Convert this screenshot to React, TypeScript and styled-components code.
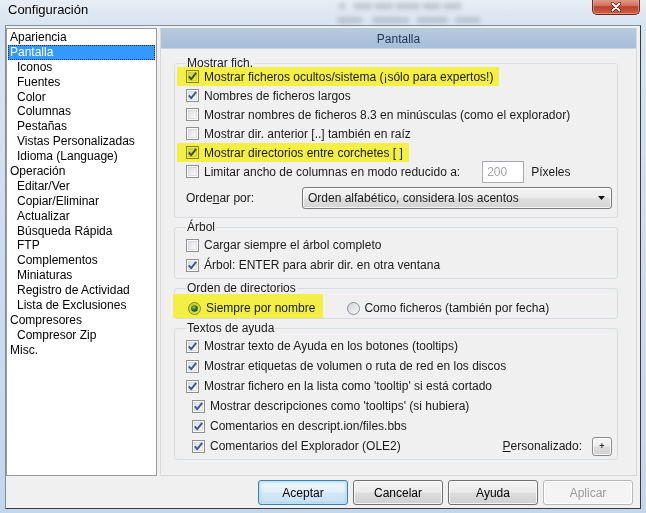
import React from "react";
import styled, { createGlobalStyle } from "styled-components";

const GlobalStyle = createGlobalStyle`
  html, body { margin: 0; padding: 0; }
  body {
    width: 646px; height: 513px; overflow: hidden;
    font-family: "Liberation Sans", Arial, sans-serif;
    font-size: 12px; color: #1a1a1a;
  }
  * { box-sizing: border-box; }
`;

const Window = styled.div`
  width: 646px;
  height: 513px;
  display: flex;
  flex-direction: column;
  padding: 0 5px 4px 5px;
  background: linear-gradient(180deg, #e6edf5 0%, #d8e4f0 5%, #c9dbed 60%, #c3d7ec 100%);
`;

const TitleBar = styled.div`
  height: 25px;
  flex: none;
  display: flex;
  align-items: flex-start;
  justify-content: space-between;
`;

const Title = styled.div`
  font-size: 13px;
  line-height: 16px;
  padding: 2px 0 0 3px;
  color: #000;
  text-shadow: 0 0 6px rgba(255, 255, 255, 0.95);
`;

const GlassBlur = styled.div`
  flex: 1;
  display: flex;
  flex-direction: column;
  align-items: center;
  gap: 6px;
  padding: 2px 0 0 120px;
  color: rgba(40, 50, 60, 0.3);
  filter: blur(2.4px);
  font-size: 10px;
  line-height: 8px;
  white-space: pre;
`;

const CloseButton = styled.div`
  width: 48px;
  height: 16px;
  margin: -1px 1px 0 0;
  border: 1px solid #6b2a22;
  border-top: none;
  border-radius: 0 0 5px 5px;
  background: linear-gradient(180deg, #e3a08e 0%, #d27560 42%, #bf4128 52%, #cb6448 100%);
  box-shadow: inset 0 0 0 1px rgba(255, 200, 180, 0.45);
  display: flex;
  align-items: center;
  justify-content: center;
`;

const Client = styled.div`
  flex: 1;
  display: flex;
  flex-direction: column;
  background: #f0f0f0;
  border: 1px solid #7f8fa3;
  border-right-color: #3c3c3c;
  border-bottom-color: #3c3c3c;
  padding: 2px 4px 3px 0;
`;

const MainRow = styled.div`
  flex: 1;
  display: flex;
  gap: 3px;
  min-height: 0;
`;

const Tree = styled.div`
  width: 151px;
  flex: none;
  background: #fff;
  border: 1px solid #9a9a9a;
  padding: 1px 1px;
`;

const TreeItem = styled.div<{ $level: number; $selected?: boolean }>`
  height: 14.9px;
  line-height: 14.9px;
  padding-left: ${(p) => 2 + p.$level * 7}px;
  white-space: nowrap;
  color: ${(p) => (p.$selected ? "#fff" : "#000")};
  background: ${(p) => (p.$selected ? "#3399ff" : "transparent")};
  outline: ${(p) => (p.$selected ? "1px dotted #0a2a5a" : "none")};
  outline-offset: -1px;
`;

const Panel = styled.div`
  flex: 1;
  display: flex;
  flex-direction: column;
  border: 1px solid #d8d8d8;
  border-top-color: #b9c6d5;
`;

const PanelHeader = styled.div`
  height: 20px;
  flex: none;
  display: flex;
  align-items: center;
  justify-content: center;
  background: linear-gradient(180deg, #b6c9df 0%, #a8bed8 100%);
  border-bottom: 1px solid #c9d4e0;
  color: #1d3350;
`;

const PanelBody = styled.div`
  flex: 1;
  display: flex;
  flex-direction: column;
  gap: 3px;
  padding: 8px 18px 0 13px;
`;

const Group = styled.fieldset<{ $pb: number }>`
  margin: 0;
  padding: 0 5px ${(p) => p.$pb}px 11px;
  border: 1px solid #d8dde2;
  border-radius: 3px;
  min-width: 0;
`;

const Legend = styled.legend`
  padding: 0 1px;
  line-height: 12px;
  font-size: 12px;
  color: #1a1a1a;
`;

const Rows = styled.div<{ $mt: number }>`
  display: flex;
  flex-direction: column;
  align-items: flex-start;
  margin-top: ${(p) => p.$mt}px;
`;

const Row = styled.div<{ $h: number; $indent?: number; $full?: boolean }>`
  height: ${(p) => p.$h}px;
  display: flex;
  align-items: center;
  gap: 5px;
  white-space: nowrap;
  margin-left: ${(p) => p.$indent || 0}px;
  align-self: ${(p) => (p.$full ? "stretch" : "auto")};
`;

const Marked = styled.div<{ $l: number; $r: number; $t?: number; $b?: number }>`
  display: flex;
  align-items: center;
  gap: 5px;
  background: #f3ef45;
  margin: ${(p) => `-${p.$t || 0}px 0 -${p.$b || 0}px -${p.$l}px`};
  padding: ${(p) => `${p.$t || 0}px ${p.$r}px ${p.$b || 0}px ${p.$l}px`};
  height: calc(100% + ${(p) => (p.$t || 0) + (p.$b || 0)}px);
  svg { mix-blend-mode: multiply; }
`;

const NumberInput = styled.div`
  width: 42px;
  height: 22px;
  flex: none;
  margin-left: 17px;
  background: #fff;
  border: 1px solid #abadb3;
  border-top-color: #a3a6ad;
  color: #a3a3a3;
  display: flex;
  align-items: center;
  padding-left: 4px;
`;

const SelectRow = styled.div`
  display: flex;
  align-items: center;
  margin-top: 6px;
  align-self: stretch;
`;

const SelectLabel = styled.span`
  width: 116px;
  flex: none;
`;

const Select = styled.div`
  width: 310px;
  height: 22px;
  display: flex;
  align-items: center;
  justify-content: space-between;
  padding: 0 6px 0 5px;
  border: 1px solid #7a7a7a;
  border-radius: 3px;
  background: linear-gradient(180deg, #f4f4f4 0%, #ececec 48%, #dfdfdf 52%, #d4d4d4 100%);
  box-shadow: inset 0 0 0 1px rgba(255, 255, 255, 0.75);
`;

const RadioOption = styled.div<{ $ml?: number }>`
  display: flex;
  align-items: center;
  gap: 4px;
  margin-left: ${(p) => p.$ml || 0}px;
`;

const Spacer = styled.div`
  flex: 1;
`;

const SmallButton = styled.div`
  width: 20px;
  height: 19px;
  margin-left: 5px;
  border: 1px solid #8a8a8a;
  border-radius: 3px;
  background: linear-gradient(180deg, #f6f6f6 0%, #ececec 48%, #dedede 52%, #d2d2d2 100%);
  box-shadow: inset 0 0 0 1px rgba(255, 255, 255, 0.8);
  display: flex;
  align-items: center;
  justify-content: center;
  font-size: 9px;
  font-weight: bold;
  color: #333;
`;

const ButtonRow = styled.div`
  flex: none;
  display: flex;
  justify-content: flex-end;
  gap: 5px;
  margin-top: 4px;
  padding-right: 3px;
`;

const Button = styled.div<{ $variant?: "default" | "disabled" }>`
  width: 90px;
  height: 25px;
  display: flex;
  align-items: center;
  justify-content: center;
  border-radius: 3px;
  border: 1px solid
    ${(p) => (p.$variant === "default" ? "#3c7fb1" : p.$variant === "disabled" ? "#b5b9bc" : "#707070")};
  color: ${(p) => (p.$variant === "disabled" ? "#9a9a9a" : "#000")};
  background: ${(p) =>
    p.$variant === "default"
      ? "linear-gradient(180deg, #f0f7fc 0%, #e3f0fa 48%, #d3e8f7 52%, #c8e1f4 100%)"
      : p.$variant === "disabled"
      ? "#f4f4f4"
      : "linear-gradient(180deg, #f3f3f3 0%, #ebebeb 48%, #dddddd 52%, #d0d0d0 100%)"};
  box-shadow: ${(p) =>
    p.$variant === "default"
      ? "inset 0 0 0 1px #bfe3f7, inset 0 0 2px 2px rgba(120, 200, 240, 0.35)"
      : "inset 0 0 0 1px rgba(255,255,255,0.8)"};
`;

const Check = ({ checked }: { checked?: boolean }) => (
  <svg width="13" height="13" viewBox="0 0 13 13" style={{ flex: "none" }}>
    <defs>
      <linearGradient id="cbIn" x1="0" y1="0" x2="1" y2="1">
        <stop offset="0" stopColor="#dcdfe3" />
        <stop offset="1" stopColor="#fafafa" />
      </linearGradient>
    </defs>
    <rect x="0.5" y="0.5" width="12" height="12" fill="#fdfdfd" stroke="#8e8f8f" />
    <rect x="2.5" y="2.5" width="8" height="8" fill="url(#cbIn)" stroke="#d0d3d7" strokeWidth="0.7" />
    {checked && (
      <path d="M2.8 6.4 L5.2 9.2 L10.2 2.8" fill="none" stroke="#3d5591" strokeWidth="1.9" strokeLinejoin="round" />
    )}
  </svg>
);

const Radio = ({ checked }: { checked?: boolean }) => (
  <svg width="13" height="13" viewBox="0 0 13 13" style={{ flex: "none" }}>
    <defs>
      <linearGradient id="rbIn" x1="0" y1="0" x2="1" y2="1">
        <stop offset="0" stopColor="#cfd2d6" />
        <stop offset="1" stopColor="#f8f8f8" />
      </linearGradient>
      <radialGradient id="rbDot" cx="0.4" cy="0.35" r="0.7">
        <stop offset="0" stopColor="#9fe0ff" />
        <stop offset="0.5" stopColor="#2a7fd0" />
        <stop offset="1" stopColor="#0f4c8c" />
      </radialGradient>
    </defs>
    <circle cx="6.5" cy="6.5" r="6" fill="url(#rbIn)" stroke="#8e8f8f" />
    {checked && <circle cx="6.5" cy="6.5" r="3.3" fill="url(#rbDot)" />}
  </svg>
);

const CloseX = () => (
  <svg width="12" height="10" viewBox="0 0 12 10">
    <path d="M2.5 1.5 L9.5 8.5 M9.5 1.5 L2.5 8.5" stroke="#4a1a12" strokeWidth="3.2" strokeLinecap="round" />
    <path d="M2.5 1.5 L9.5 8.5 M9.5 1.5 L2.5 8.5" stroke="#ffffff" strokeWidth="1.8" strokeLinecap="round" />
  </svg>
);

const DropArrow = () => (
  <svg width="7" height="4" viewBox="0 0 7 4">
    <path d="M0 0 L7 0 L3.5 4 Z" fill="#111" />
  </svg>
);

const treeItems: { label: string; level: number; selected?: boolean }[] = [
  { label: "Apariencia", level: 0 },
  { label: "Pantalla", level: 0, selected: true },
  { label: "Iconos", level: 1 },
  { label: "Fuentes", level: 1 },
  { label: "Color", level: 1 },
  { label: "Columnas", level: 1 },
  { label: "Pestañas", level: 1 },
  { label: "Vistas Personalizadas", level: 1 },
  { label: "Idioma (Language)", level: 1 },
  { label: "Operación", level: 0 },
  { label: "Editar/Ver", level: 1 },
  { label: "Copiar/Eliminar", level: 1 },
  { label: "Actualizar", level: 1 },
  { label: "Búsqueda Rápida", level: 1 },
  { label: "FTP", level: 1 },
  { label: "Complementos", level: 1 },
  { label: "Miniaturas", level: 1 },
  { label: "Registro de Actividad", level: 1 },
  { label: "Lista de Exclusiones", level: 1 },
  { label: "Compresores", level: 0 },
  { label: "Compresor Zip", level: 1 },
  { label: "Misc.", level: 0 },
];

export default function App() {
  return (
    <>
      <GlobalStyle />
      <Window>
        <TitleBar>
          <Title>Configuración</Title>
          <GlassBlur>
            <span>{"■   ■■■ ■■■ ■■■■ ■■■ ■■■"}</span>
            <span>{"      ■■■■    ■■■■■■   ■■■■■   ■■■■"}</span>
          </GlassBlur>
          <CloseButton>
            <CloseX />
          </CloseButton>
        </TitleBar>
        <Client>
          <MainRow>
            <Tree>
              {treeItems.map((t) => (
                <TreeItem key={t.label} $level={t.level} $selected={t.selected}>
                  {t.label}
                </TreeItem>
              ))}
            </Tree>
            <Panel>
              <PanelHeader>Pantalla</PanelHeader>
              <PanelBody>
                <Group $pb={8}>
                  <Legend>Mostrar fich.</Legend>
                  <Rows $mt={-2}>
                    <Row $h={19}>
                      <Marked $l={9} $r={6}>
                        <Check checked />
                        <span>Mostrar ficheros ocultos/sistema (¡sólo para expertos!)</span>
                      </Marked>
                    </Row>
                    <Row $h={19}>
                      <Check checked />
                      <span>Nombres de ficheros largos</span>
                    </Row>
                    <Row $h={19}>
                      <Check />
                      <span>Mostrar nombres de ficheros 8.3 en minúsculas (como el explorador)</span>
                    </Row>
                    <Row $h={19}>
                      <Check />
                      <span>Mostrar dir. anterior [..] también en raíz</span>
                    </Row>
                    <Row $h={19}>
                      <Marked $l={9} $r={6}>
                        <Check checked />
                        <span>Mostrar directorios entre corchetes [ ]</span>
                      </Marked>
                    </Row>
                    <Row $h={19}>
                      <Check />
                      <span>Limitar ancho de columnas en modo reducido a:</span>
                      <NumberInput>200</NumberInput>
                      <span style={{ marginLeft: 2 }}>Píxeles</span>
                    </Row>
                    <SelectRow>
                      <SelectLabel>
                        Orde<u>n</u>ar por:
                      </SelectLabel>
                      <Select>
                        <span>Orden alfabético, considera los acentos</span>
                        <DropArrow />
                      </Select>
                    </SelectRow>
                  </Rows>
                </Group>

                <Group $pb={3}>
                  <Legend>Árbol</Legend>
                  <Rows $mt={2}>
                    <Row $h={20}>
                      <Check />
                      <span>Cargar siempre el árbol completo</span>
                    </Row>
                    <Row $h={20}>
                      <Check checked />
                      <span>Árbol: ENTER para abrir dir. en otra ventana</span>
                    </Row>
                  </Rows>
                </Group>

                <Group $pb={0}>
                  <Legend>Orden de directorios</Legend>
                  <Rows $mt={4}>
                    <Row $h={20} $indent={2}>
                      <Marked $l={15} $r={8} $t={4} $b={0}>
                        <Radio checked />
                        <span>Siempre por nombre</span>
                      </Marked>
                      <RadioOption $ml={19}>
                        <Radio />
                        <span>Como ficheros (también por fecha)</span>
                      </RadioOption>
                    </Row>
                  </Rows>
                </Group>

                <Group $pb={3}>
                  <Legend>Textos de ayuda</Legend>
                  <Rows $mt={2}>
                    <Row $h={20}>
                      <Check checked />
                      <span>Mostrar texto de Ayuda en los botones (tooltips)</span>
                    </Row>
                    <Row $h={20}>
                      <Check checked />
                      <span>Mostrar etiquetas de volumen o ruta de red en los discos</span>
                    </Row>
                    <Row $h={20}>
                      <Check checked />
                      <span>Mostrar fichero en la lista como 'tooltip' si está cortado</span>
                    </Row>
                    <Row $h={20} $indent={6}>
                      <Check checked />
                      <span>Mostrar descripciones como 'tooltips' (si hubiera)</span>
                    </Row>
                    <Row $h={20} $indent={6}>
                      <Check checked />
                      <span>Comentarios en descript.ion/files.bbs</span>
                    </Row>
                    <Row $h={20} $indent={6} $full>
                      <Check checked />
                      <span>Comentarios del Explorador (OLE2)</span>
                      <Spacer />
                      <span>
                        <u>P</u>ersonalizado:
                      </span>
                      <SmallButton>+</SmallButton>
                    </Row>
                  </Rows>
                </Group>
              </PanelBody>
            </Panel>
          </MainRow>
          <ButtonRow>
            <Button $variant="default">Aceptar</Button>
            <Button>Cancelar</Button>
            <Button>Ayuda</Button>
            <Button $variant="disabled">Aplicar</Button>
          </ButtonRow>
        </Client>
      </Window>
    </>
  );
}
